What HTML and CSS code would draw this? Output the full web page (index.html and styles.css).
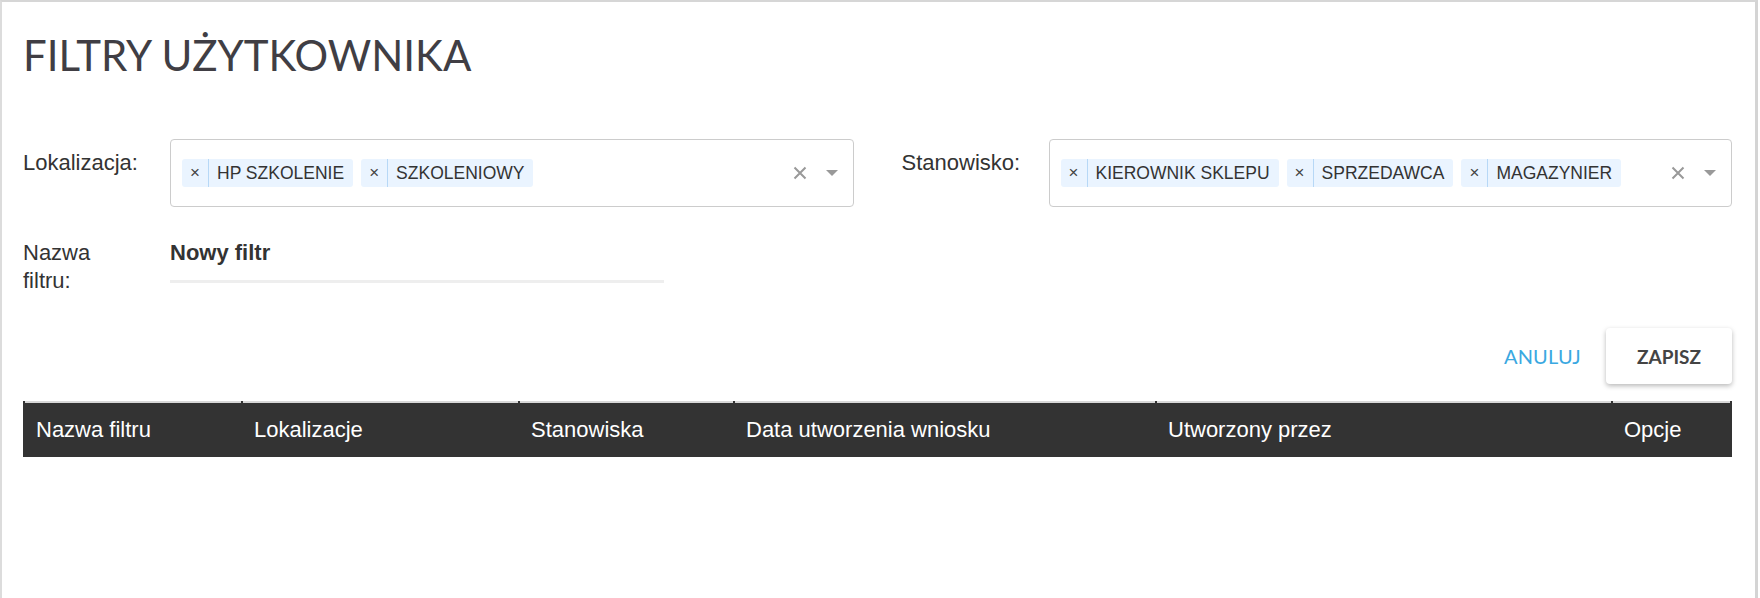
FILE: index.html
```html
<!DOCTYPE html>
<html lang="pl">
<head>
<meta charset="utf-8">
<title>Filtry użytkownika</title>
<link rel="stylesheet" href="styles.css">
</head>
<body>
<div class="card">
  <h1 class="title">FILTRY UŻYTKOWNIKA</h1>

  <div class="filters">
    <div class="field">
      <label class="field-label">Lokalizacja:</label>
      <div class="select">
        <div class="tags">
          <span class="tag"><span class="tag-remove">×</span><span class="tag-text">HP SZKOLENIE</span></span>
          <span class="tag"><span class="tag-remove">×</span><span class="tag-text">SZKOLENIOWY</span></span>
        </div>
        <span class="clear"><svg width="14" height="14" viewBox="0 0 14 14"><path d="M1.5 1.5 L12.5 12.5 M12.5 1.5 L1.5 12.5" stroke="#999" stroke-width="2" fill="none"/></svg></span>
        <span class="arrow"><svg width="12" height="6" viewBox="0 0 12 6"><path d="M0 0 H12 L6 6 Z" fill="#999"/></svg></span>
      </div>
    </div>
    <div class="field">
      <label class="field-label">Stanowisko:</label>
      <div class="select">
        <div class="tags">
          <span class="tag"><span class="tag-remove">×</span><span class="tag-text">KIEROWNIK SKLEPU</span></span>
          <span class="tag"><span class="tag-remove">×</span><span class="tag-text">SPRZEDAWCA</span></span>
          <span class="tag"><span class="tag-remove">×</span><span class="tag-text">MAGAZYNIER</span></span>
        </div>
        <span class="clear"><svg width="14" height="14" viewBox="0 0 14 14"><path d="M1.5 1.5 L12.5 12.5 M12.5 1.5 L1.5 12.5" stroke="#999" stroke-width="2" fill="none"/></svg></span>
        <span class="arrow"><svg width="12" height="6" viewBox="0 0 12 6"><path d="M0 0 H12 L6 6 Z" fill="#999"/></svg></span>
      </div>
    </div>
  </div>

  <div class="name-row">
    <label class="field-label name-label">Nazwa filtru:</label>
    <div class="name-input">Nowy filtr</div>
  </div>

  <div class="actions">
    <button class="btn-cancel">ANULUJ</button>
    <button class="btn-save">ZAPISZ</button>
  </div>

  <table class="grid">
    <thead>
      <tr>
        <th class="c-name">Nazwa filtru</th>
        <th class="c-loc">Lokalizacje</th>
        <th class="c-pos">Stanowiska</th>
        <th class="c-date">Data utworzenia wniosku</th>
        <th class="c-by">Utworzony przez</th>
        <th class="c-opt">Opcje</th>
      </tr>
    </thead>
    <tbody></tbody>
  </table>
</div>
</body>
</html>
```

FILE: styles.css
```css
* { box-sizing: border-box; }

html, body {
  margin: 0;
  padding: 0;
  background: #fff;
}

body {
  font-family: "Liberation Sans", Arial, sans-serif;
  color: #333;
  width: 1760px;
  height: 598px;
  overflow: hidden;
}

.card {
  height: 598px;
  margin-right: 2px;
  border-top: 2px solid #d6d6d6;
  border-left: 2px solid #dcdcdc;
  border-right: 3px solid #d4d4d4;
  padding: 28px 23px 0 21px;
  background: #fff;
}

.title {
  margin: 0;
  font-family: Lato, "Liberation Sans", sans-serif;
  font-weight: 400;
  font-size: 42px;
  line-height: 50px;
  color: #403e44;
}

.filters {
  margin-top: 59px;
  display: grid;
  grid-template-columns: 1fr 1fr;
  column-gap: 48px;
}

.field {
  display: flex;
  align-items: flex-start;
}

.field-label {
  flex: none;
  width: 147px;
  margin-top: 10px;
  font-size: 22px;
  line-height: 28px;
  color: #333;
}

.select {
  flex: 1;
  height: 68px;
  border: 1px solid #cccccc;
  border-radius: 4px;
  display: flex;
  align-items: center;
  padding: 0 15px 0 11px;
}

.tags {
  flex: 1;
  display: flex;
  align-items: center;
  gap: 8px;
}

.tag {
  display: flex;
  align-items: stretch;
  height: 28px;
  background: #eaf4ff;
  border-radius: 3px;
  font-size: 17.5px;
  color: #333;
}

.tag-remove {
  width: 27px;
  display: flex;
  align-items: center;
  justify-content: center;
  border-right: 1px solid #b7d8f6;
  font-size: 17px;
  color: #444;
}

.tag-text {
  display: flex;
  align-items: center;
  padding: 0 9px 0 8px;
}

.clear {
  display: flex;
  width: 14px;
  height: 14px;
  margin-right: 19px;
}

.arrow {
  display: flex;
  width: 12px;
  height: 6px;
}

.name-row {
  margin-top: 32px;
  display: flex;
  align-items: flex-start;
}

.name-label {
  margin-top: 0;
  padding-right: 40px;
}

.name-input {
  width: 494px;
  font-size: 22px;
  font-weight: 700;
  line-height: 28px;
  color: #333;
  padding-bottom: 13px;
  border-bottom: 3px solid #eeeeee;
}

.actions {
  margin-top: 33px;
  display: flex;
  justify-content: flex-end;
  align-items: center;
}

.btn-cancel {
  border: 0;
  background: none;
  padding: 0;
  margin-right: 25px;
  font-family: Lato, "Liberation Sans", sans-serif;
  font-size: 20px;
  font-weight: 400;
  color: #3aa8e1;
  letter-spacing: 0.2px;
}

.btn-save {
  width: 126px;
  height: 56px;
  border: 0;
  border-radius: 4px;
  background: #fff;
  box-shadow: 0 2px 5px rgba(0, 0, 0, 0.28);
  font-family: Lato, "Liberation Sans", sans-serif;
  font-size: 19px;
  font-weight: 700;
  color: #444;
}

.grid {
  margin-top: 17px;
  width: 100%;
  border-collapse: separate;
  border-spacing: 0;
  table-layout: fixed;
}

.grid th {
  position: relative;
  height: 56px;
  padding: 0 12px;
  background: #333333;
  color: #fff;
  border-top: 2px solid #d8d8d8;
  border-left: 1px solid #333333;
  text-align: left;
  font-weight: 400;
  font-size: 22px;
  white-space: nowrap;
}

.grid th::before {
  content: "";
  position: absolute;
  left: -1px;
  top: -2px;
  width: 2px;
  height: 2px;
  background: #333;
}

.grid th:last-child::after {
  content: "";
  position: absolute;
  right: 0;
  top: -2px;
  width: 2px;
  height: 2px;
  background: #333;
}

.c-name { width: 218px; }
.c-loc { width: 277px; }
.c-pos { width: 215px; }
.c-date { width: 422px; }
.c-by { width: 456px; }
.c-opt { width: 121px; }
```
